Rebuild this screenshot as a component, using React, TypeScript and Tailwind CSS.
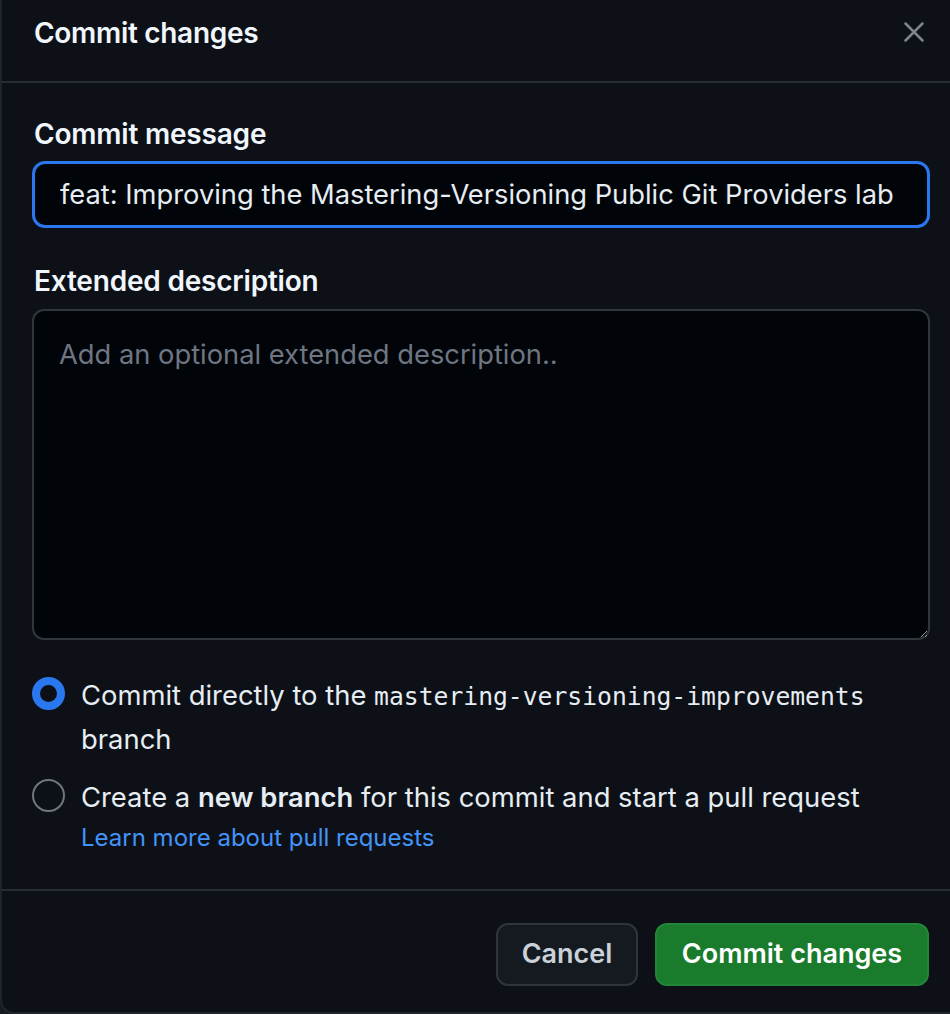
import { X } from 'lucide-react'

export default function App() {
  return (
    <div className="w-[950px] h-[1014px] bg-[#161b22]" style={{ fontFamily: 'Inter, "Noto Sans", sans-serif' }}>
      <div className="w-[950px] h-[1014px] bg-[#0d1117] border-l-2 border-b-2 border-[#1f242c] rounded-bl-[14px] flex flex-col text-[#e6edf3]">
        {/* Header */}
        <div className="h-[83px] shrink-0 flex items-start justify-between pl-[32px] pr-[19px] pt-[13px] border-b-2 border-[#262c35]">
          <h1 className="text-[28px] leading-[40px] font-semibold text-[#f0f6fc] tracking-[-0.3px]">Commit changes</h1>
          <button className="mt-[2px] text-[#7d8590]">
            <X className="w-[34px] h-[34px]" strokeWidth={1.8} />
          </button>
        </div>

        {/* Body */}
        <div className="flex flex-col shrink-0 pl-[30px] pr-[20px] pt-[35px] pb-[33px]">
          <label className="pl-[2px] text-[28px] leading-[32px] font-semibold text-[#f0f6fc] tracking-[-0.2px]">Commit message</label>
          <input
            className="mt-[11px] h-[67px] w-full rounded-[13px] border-[3px] border-[#2a78ef] bg-[#010409] px-[25px] text-[27.3px] text-[#e6edf3] outline-none"
            defaultValue="feat: Improving the Mastering-Versioning Public Git Providers lab"
          />

          <label className="mt-[37px] pl-[2px] text-[28px] leading-[32px] font-semibold text-[#f0f6fc] tracking-[-0.2px]">Extended description</label>
          <textarea
            className="mt-[12px] h-[331px] w-full rounded-[12px] border-2 border-[#30363d] bg-[#010409] px-[25px] py-[26px] text-[27.3px] leading-[36px] text-[#e6edf3] placeholder:text-[#6e7681] outline-none"
            placeholder="Add an optional extended description.."
          />

          <div className="mt-[34px] flex items-start gap-[16px]">
            <span className="mt-[3px] w-[33px] h-[33px] shrink-0 rounded-full border-[8px] border-[#2a78ef] bg-[#0d1117]" />
            <p className="text-[27.4px] leading-[42px]">
              Commit directly to the{' '}
              <code className="text-[24.7px]" style={{ fontFamily: '"DejaVu Sans Mono", "Liberation Mono", monospace' }}>
                mastering-versioning-improvements
              </code>{' '}
              branch
            </p>
          </div>

          <div className="mt-[16px] flex items-start gap-[16px]">
            <span className="mt-[3px] w-[33px] h-[33px] shrink-0 rounded-full border-2 border-[#6e7681]" />
            <div className="flex flex-col">
              <p className="text-[27.4px] leading-[42px]">
                Create a <strong className="font-semibold">new branch</strong> for this commit and start a pull request
              </p>
              <a className="mt-[2px] text-[24px] leading-[36px] text-[#4493f8]">Learn more about pull requests</a>
            </div>
          </div>
        </div>

        {/* Footer */}
        <div className="mt-auto shrink-0 border-t-2 border-[#262c35] flex justify-end gap-[17px] pr-[21px] pt-[32px] pb-[26px]">
          <button className="h-[63px] w-[142px] rounded-[12px] border-2 border-[#2f353d] bg-[#151a21] text-[27px] font-semibold text-[#c9d1d9]">
            Cancel
          </button>
          <button className="h-[63px] w-[274px] rounded-[12px] border-2 border-[#23863a] bg-[#197b2b] text-[27px] font-semibold text-white">
            Commit changes
          </button>
        </div>
      </div>
    </div>
  )
}
